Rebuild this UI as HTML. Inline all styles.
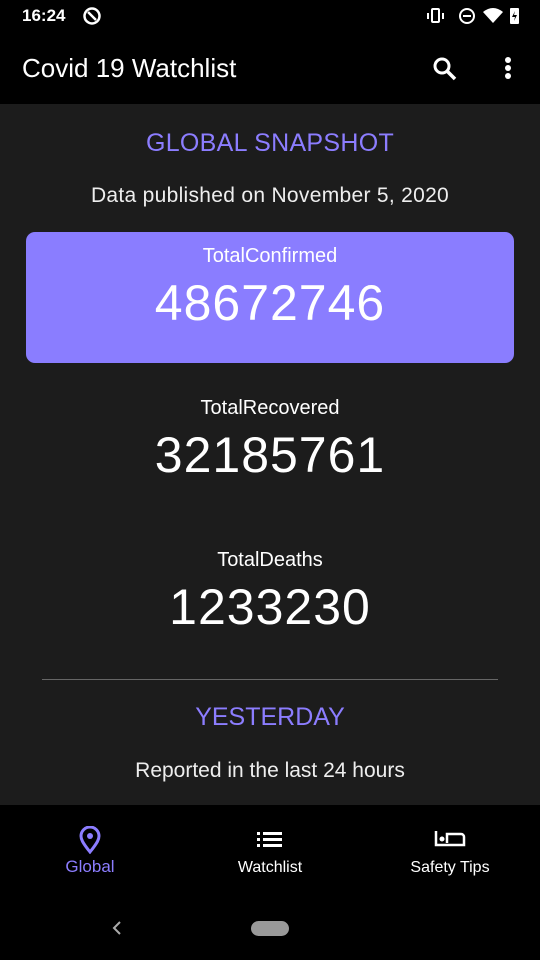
<!DOCTYPE html>
<html><head><meta charset="utf-8"><style>
*{margin:0;padding:0;box-sizing:border-box}
body{width:540px;height:960px;background:#000;font-family:"Liberation Sans",sans-serif;color:#fff;position:relative;overflow:hidden}
.abs{position:absolute}
.c{position:absolute;left:0;width:540px;text-align:center}
</style></head><body>
<div class="abs" style="left:22px;top:6px;font-size:17px;font-weight:bold">16:24</div>
<svg class="abs" style="left:82px;top:6px" width="20" height="20" viewBox="0 0 20 20"><circle cx="10" cy="10" r="7.5" fill="none" stroke="#fff" stroke-width="2.5"/><path d="M6 6 L14 14" stroke="#fff" stroke-width="2.5"/></svg>
<svg class="abs" style="left:426px;top:7px" width="95" height="18" viewBox="0 0 95 18"><rect x="6" y="2" width="7" height="13" rx="1" fill="none" stroke="#fff" stroke-width="2"/><path d="M2 6v6M17 6v6" stroke="#fff" stroke-width="2"/><circle cx="41" cy="9" r="7" fill="none" stroke="#fff" stroke-width="2"/><path d="M37 9h8" stroke="#fff" stroke-width="2"/><path d="M57 5 Q67 -3 77 5 L67 16Z" fill="#fff"/><rect x="84" y="1" width="9" height="16" rx="1" fill="#fff"/><path d="M89 4 L86 10 H89 L88 14 L91 8 H88Z" fill="#000"/></svg>
<div class="abs" style="left:22px;top:53px;font-size:26px">Covid 19 Watchlist</div>
<svg class="abs" style="left:432px;top:56px" width="26" height="26" viewBox="0 0 26 26"><circle cx="10" cy="10" r="7" fill="none" stroke="#fff" stroke-width="3"/><path d="M15 15 L23 23" stroke="#fff" stroke-width="3.5"/></svg>
<svg class="abs" style="left:502px;top:56px" width="12" height="26" viewBox="0 0 12 26"><circle cx="6" cy="4" r="3" fill="#fff"/><circle cx="6" cy="12" r="3" fill="#fff"/><circle cx="6" cy="20" r="3" fill="#fff"/></svg>
<div class="abs" style="left:0;top:104px;width:540px;height:701px;background:#1c1c1c"></div>
<div class="c" style="top:129px;font-size:25px;color:#8c7dff;letter-spacing:0.3px">GLOBAL SNAPSHOT</div>
<div class="c" style="top:184px;font-size:21px;color:#eee;letter-spacing:0.3px">Data published on November 5, 2020</div>
<div class="abs" style="left:26px;top:232px;width:488px;height:131px;background:#8a7dff;border-radius:9px"></div>
<div class="c" style="top:245px;font-size:20px">TotalConfirmed</div>
<div class="c" style="top:274px;font-size:50px;letter-spacing:1px">48672746</div>
<div class="c" style="top:397px;font-size:20px">TotalRecovered</div>
<div class="c" style="top:426px;font-size:50px;letter-spacing:1px">32185761</div>
<div class="c" style="top:549px;font-size:20px">TotalDeaths</div>
<div class="c" style="top:578px;font-size:50px;letter-spacing:1px">1233230</div>
<div class="abs" style="left:42px;top:679px;width:456px;height:1px;background:#666"></div>
<div class="c" style="top:703px;font-size:25px;color:#8c7dff">YESTERDAY</div>
<div class="c" style="top:759px;font-size:21px;color:#eee">Reported in the last 24 hours</div>
<svg class="abs" style="left:78px;top:826px" width="24" height="28" viewBox="0 0 24 28"><path d="M12 26 C4 16 3 13 3 10 A9 9 0 0 1 21 10 C21 13 20 16 12 26Z" fill="none" stroke="#8c7dff" stroke-width="3"/><circle cx="12" cy="10" r="3" fill="#8c7dff"/></svg>
<div class="abs" style="left:60px;top:857px;width:60px;text-align:center;font-size:17px;color:#8c7dff">Global</div>
<svg class="abs" style="left:257px;top:831px" width="26" height="16" viewBox="0 0 26 16"><rect x="0" y="1" width="3" height="3" fill="#fff"/><rect x="0" y="7" width="3" height="3" fill="#fff"/><rect x="0" y="13" width="3" height="3" fill="#fff"/><rect x="6" y="1" width="19" height="3" fill="#fff"/><rect x="6" y="7" width="19" height="3" fill="#fff"/><rect x="6" y="13" width="19" height="3" fill="#fff"/></svg>
<div class="abs" style="left:220px;top:859px;width:100px;text-align:center;font-size:16px">Watchlist</div>
<svg class="abs" style="left:434px;top:830px" width="32" height="17" viewBox="0 0 32 17"><path d="M2 1 V15 H30 V7 A3 3 0 0 0 27 4 H13 V13" fill="none" stroke="#fff" stroke-width="2.5"/><circle cx="8" cy="9" r="2.5" fill="#fff"/></svg>
<div class="abs" style="left:390px;top:859px;width:120px;text-align:center;font-size:16px">Safety Tips</div>
<svg class="abs" style="left:110px;top:920px" width="14" height="16" viewBox="0 0 14 16"><path d="M10 2 L4 8 L10 14" fill="none" stroke="#aaa" stroke-width="2"/></svg>
<div class="abs" style="left:251px;top:921px;width:38px;height:15px;border-radius:8px;background:#999"></div>
</body></html>
